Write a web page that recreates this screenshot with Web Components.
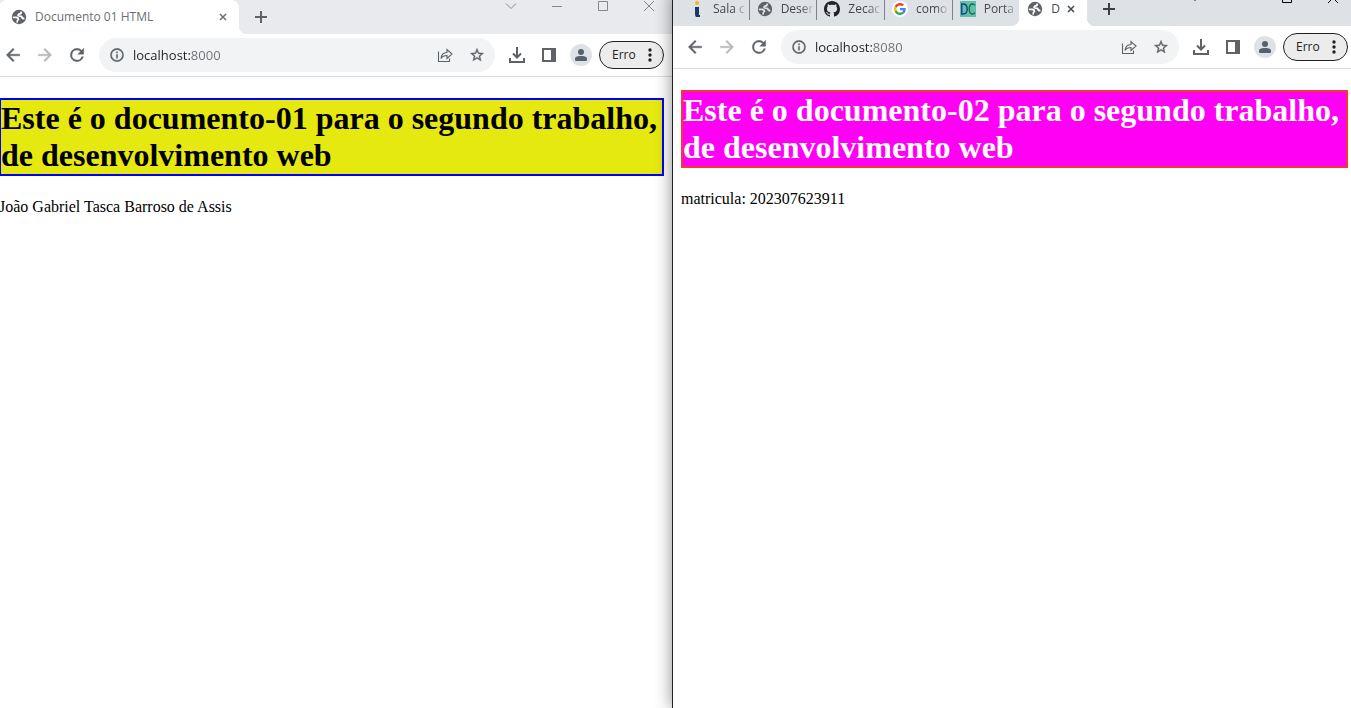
<!DOCTYPE html>
<html lang="pt-BR">
<head>
<meta charset="utf-8">
<title>Documentos 01 e 02</title>
<style>
  html, body { margin: 0; }
  body { overflow: hidden; background: #fff; }
</style>
</head>
<body>
<split-desktop>
  <browser-window class="idle" slot="left" port="8000">
    <browser-tab slot="tabs" icon="globe" label="Documento 01 HTML" active wide></browser-tab>
    <web-document tone="yellow">
      <span slot="title">Este é o documento-01 para o segundo trabalho, de desenvolvimento web</span>
      João Gabriel Tasca Barroso de Assis
    </web-document>
  </browser-window>
  <browser-window class="front" slot="right" port="8080">
    <browser-tab slot="tabs" icon="estacio" label="Sala c"></browser-tab>
    <browser-tab slot="tabs" icon="globe" label="Deser"></browser-tab>
    <browser-tab slot="tabs" icon="github" label="Zecac"></browser-tab>
    <browser-tab slot="tabs" icon="google" label="como"></browser-tab>
    <browser-tab slot="tabs" icon="dc" label="Porta"></browser-tab>
    <browser-tab slot="tabs" icon="globe" label="D" active></browser-tab>
    <web-document tone="magenta">
      <span slot="title">Este é o documento-02 para o segundo trabalho, de desenvolvimento web</span>
      matricula: 202307623911
    </web-document>
  </browser-window>
</split-desktop>

<script>
const svg = (size, body, box = 24) => `<svg width="${size}" height="${size}" viewBox="0 0 ${box} ${box}" fill="currentColor" aria-hidden="true">${body}</svg>`;

const ICONS = {
  globe: svg(16, '<circle cx="8" cy="8" r="7.200"/><path d="M10.400 2.600Q10.200 5 7.800 5.200 6 6.600 8.300 7.200L10.600 7.500Q11 9.700 13.400 9.600M1.800 8.400h3.400q2.300.3 2.200 2.100-1.500.6-1.200 3.100" fill="none" stroke="var(--hole)" stroke-width="1.700"/>', 16),
  estacio: svg(16, '<circle cx="8" cy="2" r="2" fill="#f5b324"/><path d="M6 6h4v8h1v2H7q-1-1-1-3z" fill="#17386b"/>', 16),
  github: svg(16, '<path fill="#202428" d="M8 0C3.580 0 0 3.580 0 8c0 3.540 2.290 6.530 5.470 7.590.4.07.55-.17.55-.38 0-.19-.01-.82-.01-1.490-2.010.37-2.530-.49-2.690-.94-.09-.23-.48-.94-.82-1.130-.28-.15-.68-.52-.01-.53.63-.01 1.080.58 1.230.82.72 1.210 1.870.87 2.330.66.07-.52.28-.87.51-1.070-1.780-.2-3.640-.89-3.640-3.950 0-.87.31-1.590.82-2.150-.08-.2-.36-1.020.08-2.120 0 0 .67-.21 2.200.82.64-.18 1.320-.27 2-.27s1.360.09 2 .27c1.530-1.040 2.200-.82 2.200-.82.44 1.100.16 1.920.08 2.120.51.56.82 1.270.82 2.150 0 3.070-1.870 3.750-3.650 3.950.29.25.54.73.54 1.480 0 1.070-.01 1.930-.01 2.200 0 .21.15.46.55.38A8.010 8.010 0 0 0 16 8c0-4.420-3.580-8-8-8z"/>', 16),
  google: svg(16, '<circle cx="24" cy="24" r="24" fill="#fff"/><g transform="translate(6 6) scale(.75)"><path fill="#EA4335" d="M24 9.500c3.540 0 6.710 1.220 9.210 3.600l6.850-6.850C35.900 2.380 30.470 0 24 0 14.620 0 6.510 5.380 2.560 13.220l7.980 6.190C12.430 13.720 17.740 9.500 24 9.500z"/><path fill="#4285F4" d="M46.980 24.550c0-1.570-.15-3.090-.38-4.550H24v9.020h12.940c-.58 2.960-2.260 5.480-4.780 7.180l7.730 6c4.510-4.180 7.090-10.360 7.090-17.650z"/><path fill="#FBBC05" d="M10.530 28.590c-.48-1.450-.76-2.990-.76-4.590s.27-3.140.76-4.590l-7.980-6.190C.92 16.460 0 20.120 0 24c0 3.880.92 7.540 2.560 10.780l7.970-6.190z"/><path fill="#34A853" d="M24 48c6.480 0 11.930-2.130 15.890-5.810l-7.730-6c-2.150 1.450-4.920 2.300-8.160 2.300-6.260 0-11.570-4.220-13.470-9.910l-7.980 6.190C6.510 42.620 14.620 48 24 48z"/></g>', 48),
  dc: svg(16, '<path fill="#5fbfac" d="M0 0h16v16H0z"/><g fill="none" stroke-width="1.400"><path d="M1.700 3v10h1.500c2.500 0 4-1.800 4-5s-1.500-5-4-5z" stroke="#1f3f86"/><path d="M15 4.400C14.300 3.400 13.500 3 12.500 3c-2.200 0-3.300 2-3.300 5s1.100 5 3.300 5c1 0 1.800-.4 2.500-1.400" stroke="#256b45"/></g>', 16),
  close: svg(8, '<path d="M1 1l6 6M7 1l-6 6" stroke="currentColor" stroke-width="1.500"/>', 8),
  plus: svg(12, '<path d="M6 0v12M0 6h12" stroke="currentColor" stroke-width="2"/>', 12),
  back: svg(20, '<path d="M20 11H7.830l5.590-5.590L12 4l-8 8 8 8 1.410-1.410L7.830 13H20z" stroke="currentColor" stroke-width=".5"/>'),
  forward: svg(20, '<path d="M4 11h12.170l-5.590-5.590L12 4l8 8-8 8-1.410-1.410L16.170 13H4z" stroke="currentColor" stroke-width=".5"/>'),
  reload: svg(20, '<path d="M17.650 6.350A7.960 7.960 0 0 0 12 4a8 8 0 1 0 7.730 10h-2.080A6 6 0 1 1 12 6c1.660 0 3.140.69 4.220 1.780L13 11h7V4z" stroke="currentColor" stroke-width=".5"/>'),
  info: svg(16, '<path d="M11 17h2v-6h-2zM12 2a10 10 0 1 0 0 20 10 10 0 0 0 0-20zm0 18a8 8 0 1 1 0-16 8 8 0 0 1 0 16zM11 9h2V7h-2z" stroke="currentColor" stroke-width=".5"/>'),
  share: svg(16, '<path d="M1.500 4.500v10h11v-3M4 11.500c.3-3.800 2.300-5.800 6-6V2.500L15 7l-5 4.500v-3c-2.600 0-4.600.8-6 3z" fill="none" stroke="currentColor" stroke-width="1.100"/>', 16),
  star: svg(16, '<path d="M22 9.240l-7.190-.62L12 2 9.190 8.630 2 9.240l5.460 4.730L5.820 21 12 17.270 18.180 21l-1.630-7.030zM12 15.400l-3.760 2.270 1-4.280-3.320-2.880 4.380-.38L12 6.100l1.710 4.040 4.380.38-3.320 2.880 1 4.280z" stroke="currentColor" stroke-width=".6"/>'),
  download: svg(18, '<path d="M9 1v10M5 7.500l4 4 4-4M2 12v4h14v-4" fill="none" stroke="currentColor" stroke-width="2"/>', 18),
  panel: svg(14, '<path d="M0 0h14v14H0zM2 2v10h7V2z" fill-rule="evenodd"/>', 14),
  person: svg(22, '<circle cx="11" cy="11" r="11" fill="#dee1e6"/><circle cx="11" cy="8" r="3"/><path d="M5 16v-1.500C5 12.500 9 12 11 12s6 .5 6 2.500V16q0 1-1 1H6q-1 0-1-1z"/>', 22),
  dots: svg(14, '<circle cx="7" cy="2" r="1.700"/><circle cx="7" cy="7" r="1.700"/><circle cx="7" cy="12" r="1.700"/>', 14),
  chevron: svg(12, '<path d="M1 3.500l5 5 5-5" fill="none" stroke="currentColor"/>', 12),
  minimize: svg(12, '<path d="M1 6h10v1H1z"/>', 12),
  maximize: svg(12, '<path d="M1.500 1.500h9v9h-9z" fill="none" stroke="currentColor"/>', 12),
  exit: svg(12, '<path d="M1 1l10 10M11 1L1 11" stroke="currentColor"/>', 12)
};

const BASE = `
  *, *::before, *::after { box-sizing: border-box; }
  svg { display: block; flex: none; }
  button { display: grid; place-items: center; margin: 0; padding: 0; border: 0; background: none; color: inherit; font: inherit; }
`;

class SplitDesktop extends HTMLElement {
  constructor() {
    super();
    this.attachShadow({ mode: "open" }).innerHTML = `
      <style>
        :host { display: grid; grid-template-columns: minmax(0, 672fr) minmax(0, 679fr); min-height: 100vh; overflow: hidden; }
        /* Both windows hang a little over the edges of the desktop. */
        slot[name=left]::slotted(*) { margin-left: -9px; }
        slot[name=right]::slotted(*) { margin-top: -8px; margin-right: -5px; border-left: 1px solid #202124; box-shadow: 0 0 16px rgba(0, 0, 0, .45); }
      </style>
      <slot name="left"></slot><slot name="right"></slot>`;
  }
}

class BrowserTab extends HTMLElement {
  connectedCallback() {
    if (this.shadowRoot) return;
    const active = this.hasAttribute("active");
    const label = this.getAttribute("label");
    this.attachShadow({ mode: "open" }).innerHTML = `
      <style>${BASE}
        :host { --hole: var(--strip); box-sizing: border-box; display: flex; align-items: center; height: 34px; min-width: 0; padding: 0 0 0 8px; position: relative; color: var(--tab-text); font: 12px/16px "Open Sans", sans-serif; }
        :host([active]) { --hole: #fff; padding-right: 8px; background: #fff; border-radius: 8px 8px 0 0; }
        :host([wide]) { padding-left: 12px; width: 240px; }
        :host([active])::after { content: ""; position: absolute; left: 100%; bottom: 0; width: 8px; height: 8px; background: radial-gradient(circle at 100% 0, transparent 8px, #fff 8px); }
        :host([active])::before { content: ""; position: absolute; right: 100%; bottom: 0; width: 8px; height: 8px; background: radial-gradient(circle at 0 0, transparent 8px, #fff 8px); }
        .tab { flex: 1; min-width: 0; display: flex; align-items: center; gap: 8px; text-align: left; }
        .icon { flex: none; display: grid; place-items: center; width: 16px; height: 16px; color: #5f6368; }
        .label { flex: 1; min-width: 0; white-space: nowrap; }
        :host(:not([active])) .label { -webkit-mask-image: linear-gradient(to right, #000 20px, transparent 34px); mask-image: linear-gradient(to right, #000 20px, transparent 34px); }
        .rule { position: absolute; right: -1px; top: 8px; width: 1px; height: 20px; background: #808488; }
        .close { width: 16px; height: 16px; flex: none; }
      </style>
      <button class="tab" role="tab" aria-selected="${active}"><span class="icon">${ICONS[this.getAttribute("icon")]}</span><span class="label">${label}</span></button>
      ${active ? `<button class="close" aria-label="Fechar">${ICONS.close}</button>` : this.nextElementSibling.hasAttribute("active") ? "" : `<span class="rule"></span>`}`;
  }
}

class BrowserWindow extends HTMLElement {
  connectedCallback() {
    if (this.shadowRoot) return;
    const port = this.getAttribute("port");
    this.attachShadow({ mode: "open" }).innerHTML = `
      <style>${BASE}
        :host { display: block; background: #fff; --strip: #dee1e6; --tab-text: #45484d; --caption: #000; --plus: #3c4043; }
        :host(.front) { position: relative; z-index: 1; }
        :host(.idle) { --strip: #e8eaed; --tab-text: #6b6e73; --caption: #85878a; --plus: #5f6368; }
        .strip { display: flex; align-items: center; height: 34px; padding-left: 8px; background: var(--strip); }
        .tabs { display: grid; grid-auto-flow: column; grid-auto-columns: minmax(0, 1fr); }
        :host(.front) .tabs { width: 406px; }
        .new { width: 28px; height: 28px; margin-left: 8px; color: var(--plus); }
        .caption { display: flex; margin-left: auto; align-self: flex-start; color: var(--caption); }
        .caption button { width: 46px; height: 12px; }
        .bar { display: flex; align-items: center; height: 43px; padding: 0 8px 1px 6px; border-bottom: 1px solid #dadce0; color: #5f6368; background: #fff; }
        .bar > button { width: 32px; height: 32px; }
        .off { opacity: .45; }
        .omni { flex: 1; min-width: 0; display: flex; align-items: center; height: 34px; margin: 0 6px; padding: 0 2px 0 10px; border-radius: 17px; background: #f1f3f4; }
        .omni button { width: 32px; height: 32px; }
        .omni .info { width: 16px; }
        input { flex: 1; min-width: 0; margin: 0 0 0 8px; padding: 0; border: 0; outline: 0; height: 24px; font: 13px/24px "Open Sans", sans-serif; color: transparent; background: linear-gradient(to right, #202124 57px, #6b6f74 57px); -webkit-background-clip: text; background-clip: text; }
        .bar > .erro { display: flex; align-items: center; justify-content: space-between; width: 65px; height: 28px; margin-left: 2px; padding: 0 6px 0 12px; border: 1px solid #202124; border-radius: 14px; background: #ececec; color: #202124; font: 12px/16px "Open Sans", sans-serif; }
        .person { color: #56606f; }
      </style>
      <header>
        <div class="strip">
          <div class="tabs" role="tablist"><slot name="tabs"></slot></div>
          <button class="new" aria-label="Nova guia">${ICONS.plus}</button>
          <div class="caption">
            <button aria-label="Pesquisar guias">${ICONS.chevron}</button>
            <button aria-label="Minimizar">${ICONS.minimize}</button>
            <button aria-label="Maximizar">${ICONS.maximize}</button>
            <button aria-label="Fechar janela">${ICONS.exit}</button>
          </div>
        </div>
        <nav class="bar">
          <button aria-label="Voltar">${ICONS.back}</button>
          <button class="off" aria-label="Avançar">${ICONS.forward}</button>
          <button aria-label="Recarregar">${ICONS.reload}</button>
          <div class="omni">
            <button class="info" aria-label="Informações do site">${ICONS.info}</button>
            <input type="text" aria-label="Endereço" value="localhost:${port}">
            <button aria-label="Compartilhar">${ICONS.share}</button>
            <button aria-label="Favoritos">${ICONS.star}</button>
          </div>
          <button aria-label="Downloads">${ICONS.download}</button>
          <button aria-label="Painel lateral">${ICONS.panel}</button>
          <button class="person" aria-label="Perfil">${ICONS.person}</button>
          <button class="erro">Erro ${ICONS.dots}</button>
        </nav>
      </header>
      <slot></slot>`;
  }
}

class WebDocument extends HTMLElement {
  constructor() {
    super();
    this.attachShadow({ mode: "open" }).innerHTML = `
      <style>
        :host { display: flow-root; padding: 0 8px; color: #000; font: 16px/18px "Liberation Serif", "Times New Roman", serif; }
        h1 { margin: 21px 0 22px; border: 2px solid #00f; background: #e6e90f; font-size: 32px; line-height: 37px; font-weight: bold; }
        :host([tone=magenta]) h1 { border-color: #f03a3a; background: #ff00f5; color: #fff; }
        p { margin: 0; }
      </style>
      <h1><slot name="title"></slot></h1>
      <p><slot></slot></p>`;
  }
}

customElements.define("browser-tab", BrowserTab);
customElements.define("web-document", WebDocument);
customElements.define("browser-window", BrowserWindow);
customElements.define("split-desktop", SplitDesktop);
</script>
</body>
</html>
